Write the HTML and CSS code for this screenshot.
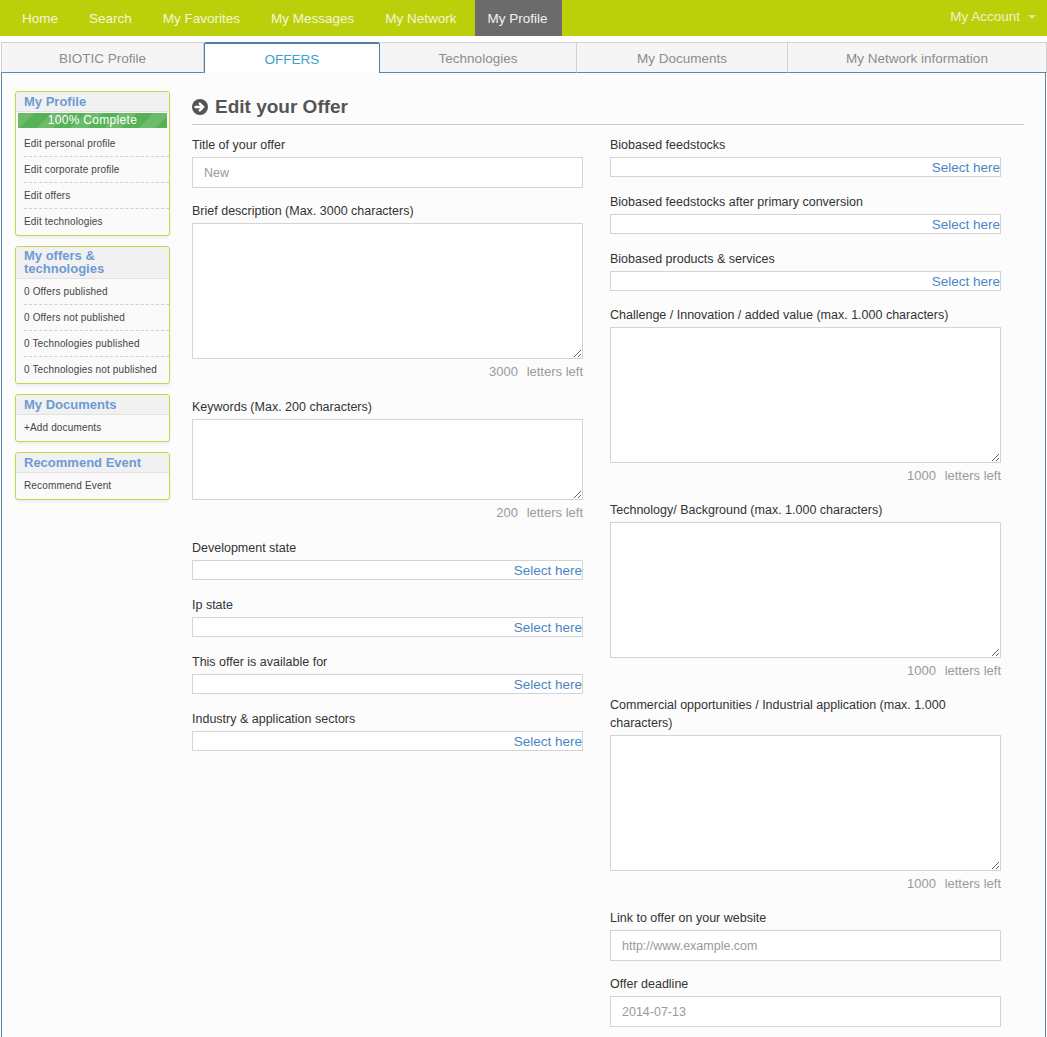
FILE: index.html
```html
<!DOCTYPE html>
<html>
<head>
<meta charset="utf-8">
<link rel="stylesheet" href="styles.css">
</head>
<body>
<nav class="topnav">
  <ul class="nav-left">
    <li><a>Home</a></li>
    <li><a>Search</a></li>
    <li><a>My Favorites</a></li>
    <li><a>My Messages</a></li>
    <li><a>My Network</a></li>
    <li class="active"><a>My Profile</a></li>
  </ul>
  <div class="account">My Account <span class="caret"></span></div>
</nav>

<div class="tabs">
  <div class="tab t1">BIOTIC Profile</div>
  <div class="tab t2 active">OFFERS</div>
  <div class="tab t3">Technologies</div>
  <div class="tab t4">My Documents</div>
  <div class="tab t5">My Network information</div>
</div>

<div class="panel">
  <aside class="sidebar">
    <div class="sbox">
      <div class="sbox-head">My Profile</div>
      <div class="progress">100% Complete</div>
      <ul class="slist first">
        <li>Edit personal profile</li>
        <li>Edit corporate profile</li>
        <li>Edit offers</li>
        <li>Edit technologies</li>
      </ul>
    </div>
    <div class="sbox">
      <div class="sbox-head two">My offers &amp;<br>technologies</div>
      <ul class="slist">
        <li>0 Offers published</li>
        <li>0 Offers not published</li>
        <li>0 Technologies published</li>
        <li>0 Technologies not published</li>
      </ul>
    </div>
    <div class="sbox">
      <div class="sbox-head">My Documents</div>
      <ul class="slist">
        <li>+Add documents</li>
      </ul>
    </div>
    <div class="sbox">
      <div class="sbox-head">Recommend Event</div>
      <ul class="slist">
        <li>Recommend Event</li>
      </ul>
    </div>
  </aside>

  <main class="main">
    <h1 class="title">
      <svg class="ticon" viewBox="0 0 16 16" width="16" height="16">
        <circle cx="8" cy="8" r="8" fill="#545454"/>
        <path d="M3.6 8 H11 M7.8 4.6 L11.3 8 L7.8 11.4" stroke="#fff" stroke-width="2.4" fill="none" stroke-linecap="round" stroke-linejoin="round"/>
      </svg>
      Edit your Offer
    </h1>
    <div class="cols">
      <div class="col">
        <div class="field">
          <label>Title of your offer</label>
          <input class="inp" type="text" placeholder="New">
        </div>
        <div class="field wide">
          <label>Brief description (Max. 3000 characters)</label>
          <textarea class="ta big"></textarea>
          <div class="counter"><span class="num">3000</span> letters left</div>
        </div>
        <div class="field wide">
          <label>Keywords (Max. 200 characters)</label>
          <textarea class="ta small"></textarea>
          <div class="counter"><span class="num">200</span> letters left</div>
        </div>
        <div class="field selfield">
          <label>Development state</label>
          <div class="sel">Select here</div>
        </div>
        <div class="field selfield">
          <label>Ip state</label>
          <div class="sel">Select here</div>
        </div>
        <div class="field selfield">
          <label>This offer is available for</label>
          <div class="sel">Select here</div>
        </div>
        <div class="field selfield">
          <label>Industry &amp; application sectors</label>
          <div class="sel">Select here</div>
        </div>
      </div>
      <div class="col right">
        <div class="field selfield">
          <label>Biobased feedstocks</label>
          <div class="sel">Select here</div>
        </div>
        <div class="field selfield">
          <label>Biobased feedstocks after primary conversion</label>
          <div class="sel">Select here</div>
        </div>
        <div class="field selfield">
          <label>Biobased products &amp; services</label>
          <div class="sel">Select here</div>
        </div>
        <div class="field wide">
          <label>Challenge / Innovation / added value (max. 1.000 characters)</label>
          <textarea class="ta big"></textarea>
          <div class="counter"><span class="num">1000</span> letters left</div>
        </div>
        <div class="field wide">
          <label>Technology/ Background (max. 1.000 characters)</label>
          <textarea class="ta big"></textarea>
          <div class="counter"><span class="num">1000</span> letters left</div>
        </div>
        <div class="field wide">
          <label>Commercial opportunities / Industrial application (max. 1.000 characters)</label>
          <textarea class="ta big"></textarea>
          <div class="counter"><span class="num">1000</span> letters left</div>
        </div>
        <div class="field">
          <label>Link to offer on your website</label>
          <input class="inp" type="text" placeholder="http://www.example.com">
        </div>
        <div class="field">
          <label>Offer deadline</label>
          <input class="inp" type="text" placeholder="2014-07-13">
        </div>
      </div>
    </div>
  </main>
</div>
</body>
</html>
```
FILE: styles.css
```css
* { box-sizing: border-box; }
html, body { margin: 0; padding: 0; background: #ffffff; }
body { font-family: "Liberation Sans", Arial, sans-serif; color: #333; }

.topnav {
  height: 36px;
  background: #bccf0b;
  display: flex;
  justify-content: space-between;
  align-items: stretch;
  padding-left: 9px;
}
.nav-left {
  list-style: none;
  margin: 0;
  padding: 0;
  display: flex;
  gap: 5px;
}
.nav-left li {
  display: flex;
  align-items: center;
  padding: 0 13px;
  font-size: 13.5px;
  color: #f3f7d9;
}
.nav-left li.active { background: #6b6b6b; color: #f2f2f2; padding: 0 14px 0 13px; }
.account {
  display: flex;
  align-items: center;
  padding-right: 11px;
  padding-bottom: 4px;
  font-size: 13.5px;
  color: #eef3cf;
  gap: 8px;
}
.caret {
  width: 0; height: 0;
  border-left: 4px solid transparent;
  border-right: 4px solid transparent;
  border-top: 4px solid #dfe89a;
  margin-top: 2px;
}

.tabs {
  margin-top: 6px;
  margin-left: 1px;
  display: grid;
  grid-template-columns: 203px 176px 197px 211px 1fr;
  height: 31px;
}
.tab {
  display: flex;
  align-items: center;
  justify-content: center;
  font-size: 13.5px;
  color: #8c8c8c;
  background: #f5f5f5;
  border: 1px solid #d2d2d2;
  border-left: none;
  border-bottom: 1px solid #5b88a8;
  padding-top: 2px;
}
.tab.t1 { border-left: 1px solid #d2d2d2; }
.tab.active {
  background: #fff;
  color: #3aa0cf;
  border: 1px solid #4f7f9f;
  border-top: 2px solid #4f7f9f;
  border-bottom: none;
  border-radius: 2px 2px 0 0;
}

.panel {
  margin-left: 1px;
  margin-right: 1px;
  background: #fcfcfc;
  border-left: 1px solid #5b88a8;
  border-right: 1px solid #5b88a8;
  display: flex;
  padding: 18px 21px 0 13px;
  min-height: 964px;
}

.sidebar { width: 155px; flex: none; display: flex; flex-direction: column; gap: 10px; }
.sbox {
  border: 1px solid #c4d64a;
  border-radius: 3px;
  background: #fafafa;
  box-shadow: 0 2px 3px rgba(0,0,0,0.06);
  overflow: hidden;
}
.sbox-head {
  background: #f1f1f1;
  border-bottom: 1px solid #e2e2e2;
  color: #6c9bd3;
  font-weight: bold;
  font-size: 13px;
  line-height: 14px;
  padding: 3px 8px 2px;
}
.sbox-head.two { line-height: 13px; padding: 2px 8px 3px; }
.progress {
  margin: 1px 2px 0;
  height: 15px;
  background-color: #57b257;
  background-image: repeating-linear-gradient(135deg, rgba(255,255,255,0.12) 0 12px, rgba(255,255,255,0) 12px 24px);
  color: #fff;
  font-size: 12px;
  line-height: 15px;
  text-align: center;
  letter-spacing: 0.3px;
}
.slist { list-style: none; margin: 0; padding: 0 0 0 8px; }
.slist.first { padding-top: 3px; }
.slist li {
  font-size: 10px;
  color: #444;
  height: 26px;
  line-height: 26px;
  border-bottom: 1px dashed #d0d0d0;
  letter-spacing: 0.15px;
}
.slist li:last-child { border-bottom: none; }

.main { flex: 1; margin-left: 22px; }
.title {
  margin: 0;
  font-size: 19px;
  font-weight: bold;
  color: #555;
  display: flex;
  align-items: center;
  gap: 7px;
  height: 34px;
  padding-bottom: 2px;
  border-bottom: 1px solid #cccccc;
}
.ticon { flex: none; }

.cols {
  display: grid;
  grid-template-columns: 391px 391px;
  column-gap: 27px;
  padding-top: 11px;
}
.field { margin-bottom: 14px; }
.field.wide { margin-bottom: 17px; }
.field.selfield { margin-bottom: 16px; }
.col.right .field.wide { margin-bottom: 16px; }
.col.right .field.selfield:nth-child(3) { margin-bottom: 15px; }
.field label {
  display: block;
  font-size: 12.5px;
  line-height: 18px;
  color: #333;
  margin-bottom: 3px;
}
.inp {
  display: block;
  width: 100%;
  height: 31px;
  border: 1px solid #d4d4d4;
  background: #fff;
  font-family: "Liberation Sans", Arial, sans-serif;
  font-size: 12.5px;
  padding: 0 11px;
  color: #333;
  outline: none;
}
.inp::placeholder { color: #9a9a9a; }
.ta {
  display: block;
  width: 100%;
  border: 1px solid #d4d4d4;
  background: #fff;
  resize: vertical;
  font-family: "Liberation Sans", Arial, sans-serif;
  outline: none;
}
.ta.big { height: 136px; }
.ta.small { height: 81px; }
.counter {
  text-align: right;
  font-size: 13px;
  line-height: 18px;
  margin-top: 4px;
  color: #9a9a9a;
}
.counter .num { margin-right: 5px; }
.sel {
  height: 20px;
  border: 1px solid #d4d4d4;
  background: #fff;
  text-align: right;
  color: #4a86c4;
  font-size: 13.5px;
  line-height: 19px;
}
```
